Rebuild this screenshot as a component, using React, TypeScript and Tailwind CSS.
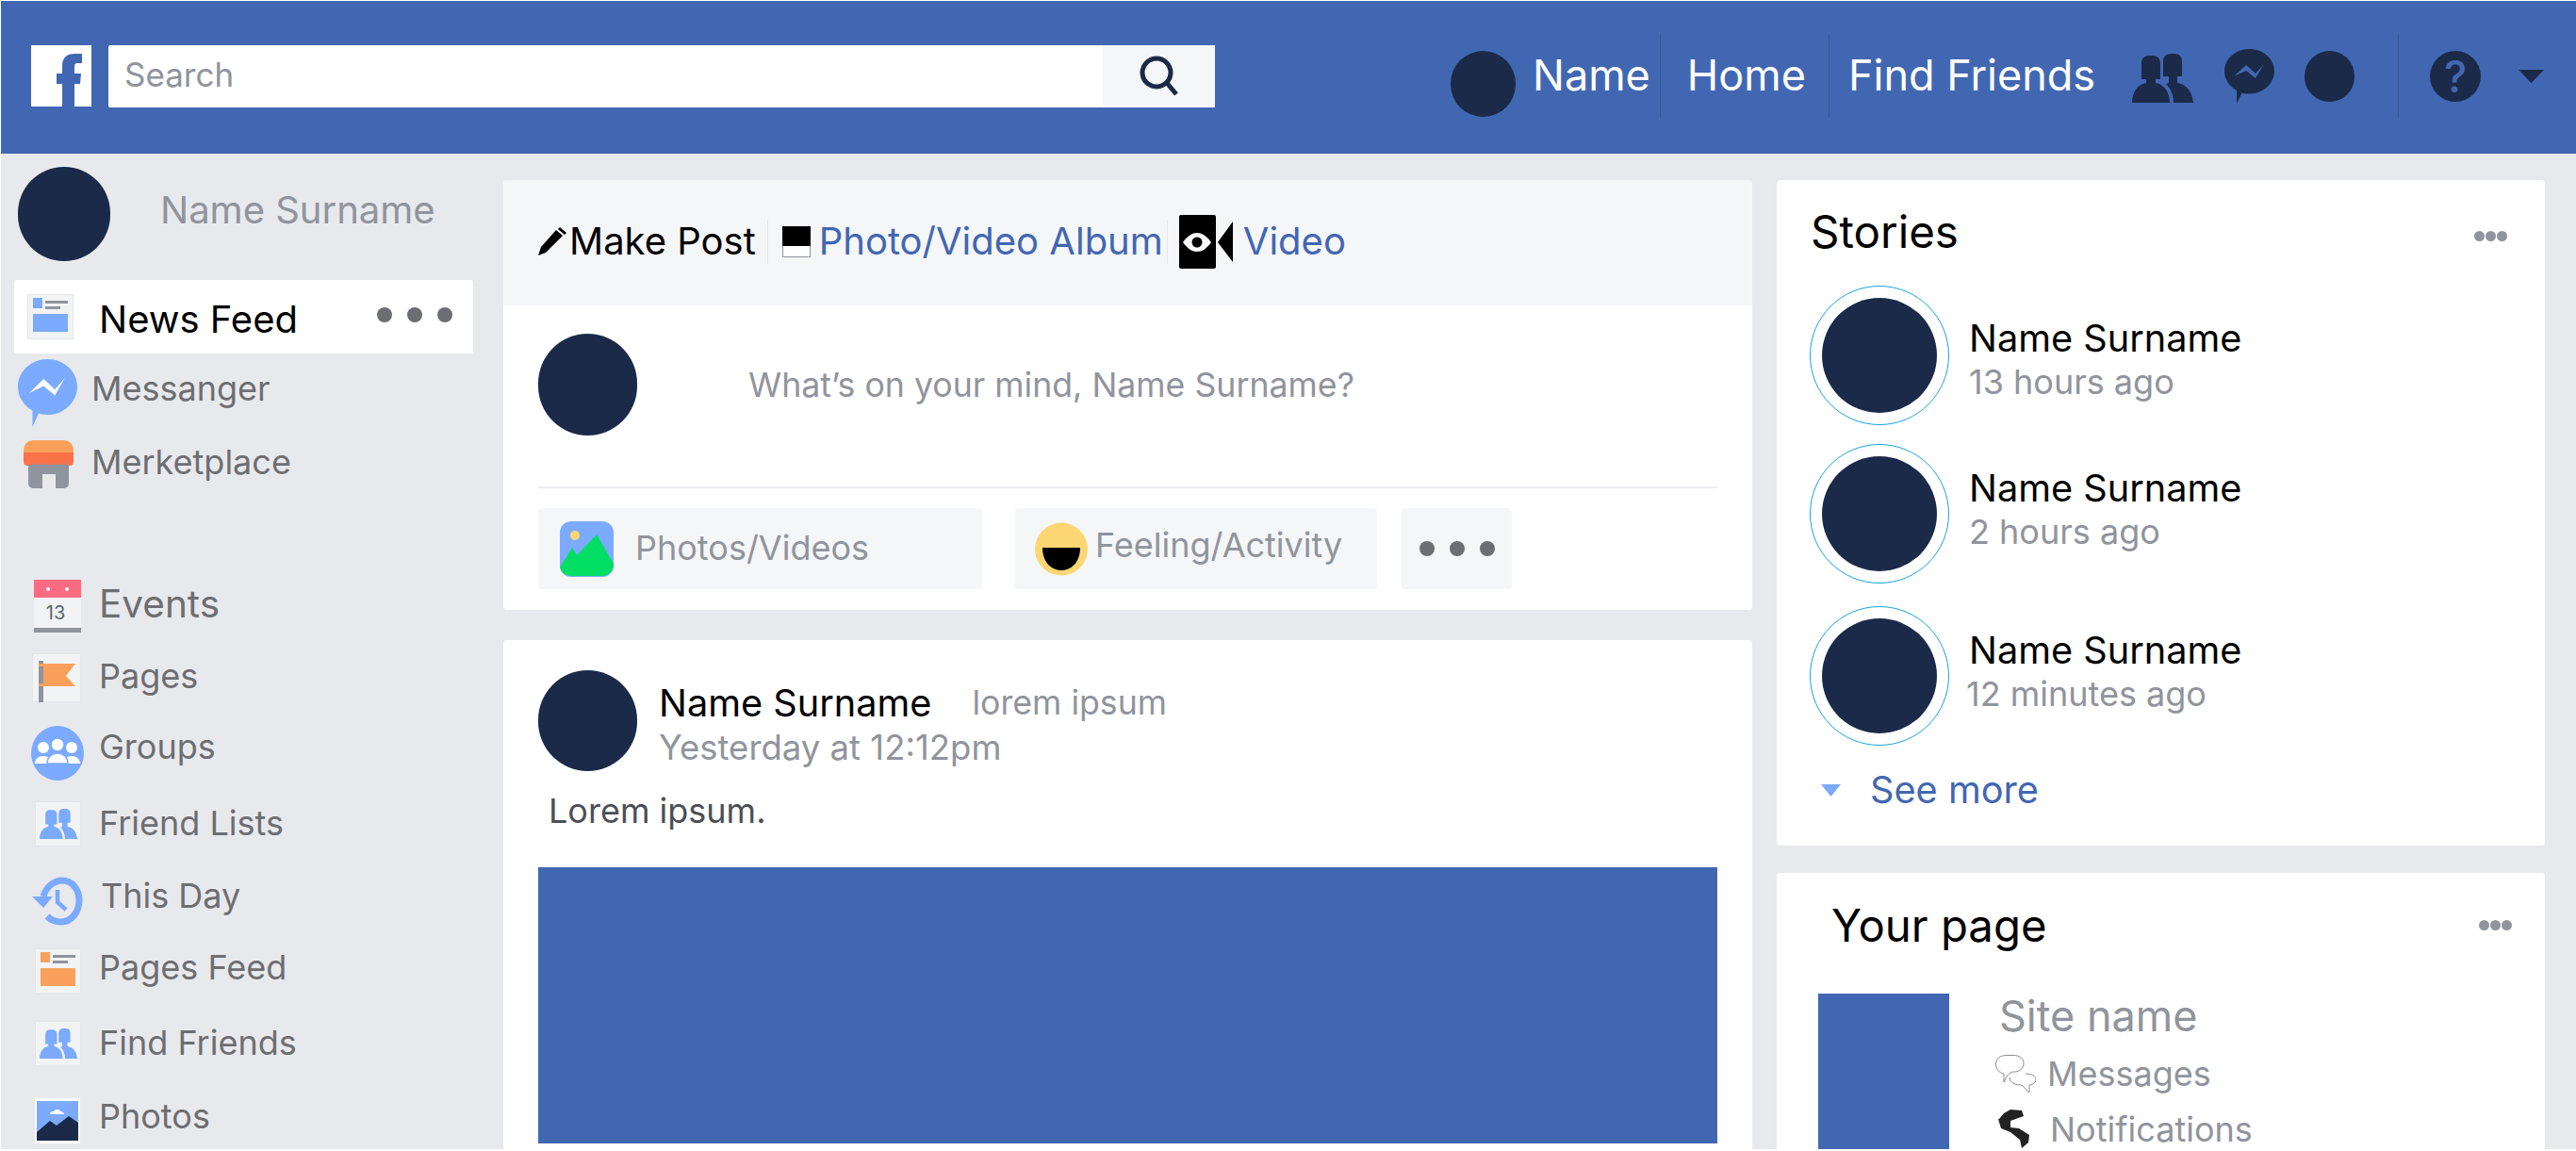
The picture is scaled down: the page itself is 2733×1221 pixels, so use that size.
import React from 'react';

const Friends = ({ className }: { className: string }) => (
  <svg viewBox="0 0 65 52" className={className} fill="currentColor">
    <path d="M18 2h4c5 0 8 3 8 8v17h-5v4c9 1 15 10 15 21H0c0-11 6-20 15-21v-4h-5V10c0-5 3-8 8-8z" />
    <path d="M41 0h4c5 0 8 3 8 8v16h-5v7c10 1 16 10 17 21H44c0-8-3-15-8-20l3-1v-7h-6V8c0-5 3-8 8-8z" />
  </svg>
);

const Messenger = ({ className, bolt }: { className: string; bolt: string }) => (
  <svg viewBox="0 0 53 58" className={className} preserveAspectRatio="none">
    <path fill="currentColor" d="M26.500 0C41 0 53 10.500 53 23.500S41 47.500 26.500 47.500c-3 0-6-.4-8-1.100L13 58V44C5 39.500 0 32 0 23.500 0 10.500 12 0 26.500 0z" />
    <path fill={bolt} d="M10 29l13-12 10 9 9-10-9 15-10-8z" />
  </svg>
);

const Dots = ({ className }: { className: string }) => (
  <div className={`flex items-center ${className}`}>
    <span className="w-4 h-4 rounded-full bg-[#6d6e71]" />
    <span className="w-4 h-4 rounded-full bg-[#6d6e71]" />
    <span className="w-4 h-4 rounded-full bg-[#6d6e71]" />
  </div>
);

const SmallDots = ({ className = '' }: { className?: string }) => (
  <div className={`flex items-center gap-px ${className}`}>
    <span className="w-[11px] h-[11px] rounded-full bg-[#90949c]" />
    <span className="w-[11px] h-[11px] rounded-full bg-[#90949c]" />
    <span className="w-[11px] h-[11px] rounded-full bg-[#90949c]" />
  </div>
);

const Avatar = ({ className }: { className: string }) => <div className={`rounded-full bg-[#1b2a49] shrink-0 ${className}`} />;

const Feed = ({ main }: { main: string }) => (
  <svg viewBox="0 0 49 48" className="w-[49px] h-[48px]">
    <rect x=".5" y=".5" width="48" height="47" fill="#f2f3f5" stroke="#e4e6ea" />
    <rect x="6" y="4" width="10" height="11" fill={main} />
    <rect x="19" y="7" width="24" height="3" fill="#90949c" />
    <rect x="19" y="13" width="16" height="3" fill="#90949c" />
    <rect x="6" y="21" width="37" height="19" fill={main} />
  </svg>
);

const FriendsTile = () => (
  <div className="w-[49px] h-[48px] bg-[#f2f3f5] border border-[#e4e6ea] flex items-center justify-center">
    <Friends className="w-[44px] h-[32px] text-[#7baaff]" />
  </div>
);

const sideIcons: Record<string, React.ReactNode> = {
  Events: (
    <svg viewBox="0 0 50 56" className="w-[50px] h-[56px]">
      <rect width="50" height="56" fill="#f2f3f5" />
      <rect width="50" height="19" fill="#ff6b81" />
      <circle cx="15" cy="10" r="2" fill="#fff" />
      <circle cx="35" cy="10" r="2" fill="#fff" />
      <rect y="51" width="50" height="5" fill="#90949c" />
      <text x="23" y="42" textAnchor="middle" fontSize="20" fill="#606770" fontFamily="Inter, sans-serif">13</text>
    </svg>
  ),
  Pages: (
    <svg viewBox="0 0 52 52" className="w-[52px] h-[52px]">
      <rect x=".5" y=".5" width="51" height="51" fill="#f2f3f5" stroke="#e4e6ea" />
      <rect x="7" y="8" width="5" height="44" fill="#90949c" />
      <path fill="#f9a15c" d="M7 11h39L36 24l10 11H7v-3h5V14H7z" />
    </svg>
  ),
  Groups: (
    <svg viewBox="0 0 56 58" className="w-[56px] h-[58px]">
      <ellipse cx="28" cy="29" rx="28" ry="29" fill="#7baaff" />
      <g fill="#fff">
        <circle cx="13" cy="23" r="6" />
        <circle cx="43" cy="23" r="6" />
        <path d="M4 40c0-5 4-8 9-8s9 3 9 8zM34 40c0-5 4-8 9-8s9 3 9 8z" />
      </g>
      <g fill="#fff" stroke="#7baaff" strokeWidth="1.500">
        <circle cx="28" cy="20" r="7" />
        <path d="M17 40c0-7 5-11 11-11s11 4 11 11z" />
      </g>
    </svg>
  ),
  'Friend Lists': <FriendsTile />,
  'This Day': (
    <svg viewBox="0 0 54 52" className="w-[54px] h-[52px]" fill="none">
      <path stroke="#7baaff" strokeWidth="7" d="M12 21C15 10 24 4 32 4c10 0 18 9 18 21 0 13-9 23-19 23-6 0-11-2-15-6" />
      <path fill="#7baaff" d="M0 21h22L12 33z" />
      <path stroke="#7baaff" strokeWidth="4.500" d="M27 14v13l9 8" />
    </svg>
  ),
  'Pages Feed': <Feed main="#f9a15c" />,
  'Find Friends': <FriendsTile />,
  Photos: (
    <svg viewBox="0 0 48 48" className="w-[48px] h-[48px]">
      <rect width="48" height="48" fill="#fff" />
      <rect x="2" y="3" width="44" height="42" fill="#7baaff" />
      <path fill="#1b2a49" d="M2 45V36l14-12 7 5 13-10 10 7v19z" />
      <path fill="#fff" d="M16 17c0-3 3-3 4-3 1-3 6-3 7 0 2 0 4 1 4 3z" />
    </svg>
  ),
};

const sideLinks = [
  { label: 'Events', box: 'h-[56px] mt-[97px] pl-[35px]', text: 'ml-[19px] pb-[4px] text-[40.500px] leading-[50px]' },
  { label: 'Pages', box: 'h-[52px] mt-[22px] pl-[33px]', text: 'ml-[19px] pb-[4px]' },
  { label: 'Groups', box: 'h-[58px] mt-[25px] pl-[32px]', text: 'ml-[16px] pb-[14px]' },
  { label: 'Friend Lists', box: 'h-[48px] mt-[22px] pl-[36px]', text: 'ml-[19px] pb-[2px]' },
  { label: 'This Day', box: 'h-[52px] mt-[32px] pl-[33px]', text: 'ml-[19px] pb-[12px]' },
  { label: 'Pages Feed', box: 'h-[48px] mt-[24px] pl-[36px]', text: 'ml-[19px] pb-[8px]' },
  { label: 'Find Friends', box: 'h-[46px] mt-[30px] pl-[36px]', text: 'ml-[19px] pb-[2px]' },
  { label: 'Photos', box: 'h-[48px] mt-[35px] pl-[36px]', text: 'ml-[20px] pb-[10px]' },
];

const stories = [
  { ago: '13 hours ago', box: 'mt-[31px]', sub: 'ml-0', text: 'pt-[8px]' },
  { ago: '2 hours ago', box: 'mt-[20px]', sub: 'ml-0', text: 'pb-[10px]' },
  { ago: '12 minutes ago', box: 'mt-[24px]', sub: '-ml-[3px]', text: 'pb-[10px]' },
];

export default function App() {
  return (
    <div className="w-[2733px] h-[1221px] overflow-hidden bg-white pt-px pl-px font-['Inter',sans-serif] text-[36px] leading-[44px] text-[#90949c]">
      <div className="h-[1218px] bg-[#e8e9ed] overflow-hidden">
        <header className="h-[162px] pb-[3px] bg-[#4267b2] flex items-center text-white text-[45px] leading-[52px]">
          <div className="ml-[32px] w-[64px] h-[65px] bg-white shrink-0">
            <svg viewBox="0 0 64 65" className="w-[64px] h-[65px]">
              <path fill="#4267b2" d="M33 65V41H27V30H33V22C33 13 38 9 46 9H54V19H49C47 19 46 20 46 23V30H53L52 41H46V65Z" />
            </svg>
          </div>
          <div className="ml-[18px] w-[1174px] h-[66px] bg-white rounded-[2px] flex items-center justify-between shrink-0">
            <span className="ml-[17px] pb-[4px] text-[35px] leading-[44px] text-[#90949c]">Search</span>
            <div className="w-[119px] h-[66px] bg-[#f5f6f8] flex items-center justify-center">
              <svg viewBox="0 0 42 43" className="w-[42px] h-[43px]" fill="none" stroke="#1b2a49" strokeWidth="5">
                <circle cx="18" cy="18" r="15" />
                <path d="M29 29l10 12" />
              </svg>
            </div>
          </div>
          <Avatar className="ml-[250px] mt-[16px] w-[69px] h-[70px]" />
          <span className="ml-[18px] pb-[2px]">Name</span>
          <div className="ml-[10px] w-px h-[89px] bg-[#385898]" />
          <span className="ml-[28px] pb-[2px]">Home</span>
          <div className="ml-[24px] w-px h-[89px] bg-[#385898]" />
          <span className="ml-[20px] pb-[2px]">Find Friends</span>
          <Friends className="ml-[39px] mt-[4px] w-[65px] h-[52px] text-[#1b2a49] shrink-0" />
          <Messenger className="ml-[33px] w-[53px] h-[58px] text-[#1b2a49] shrink-0" bolt="#4267b2" />
          <Avatar className="ml-[32px] w-[53px] h-[54px]" />
          <div className="ml-[46px] w-px h-[89px] bg-[#385898]" />
          <div className="ml-[33px] w-[54px] h-[54px] rounded-full bg-[#1b2a49] flex items-center justify-center text-[#4267b2] text-[46px] font-medium shrink-0">?</div>
          <svg viewBox="0 0 27 14" className="ml-[40px] w-[27px] h-[14px] shrink-0">
            <path fill="#1b2a49" d="M0 0h27L13.500 14z" />
          </svg>
        </header>

        <main className="flex items-start">
          <aside className="w-[533px] shrink-0">
            <div className="flex items-start pt-[14px] pl-[18px]">
              <Avatar className="w-[98px] h-[100px]" />
              <span className="ml-[53px] mt-[22px] text-[40px] leading-[48px]">Name Surname</span>
            </div>
            <div className="ml-[14px] mt-[20px] w-[487px] h-[78px] bg-white rounded-[2px] flex items-center">
              <div className="ml-[14px]"><Feed main="#7baaff" /></div>
              <span className="ml-[27px] pt-[6px] text-[40px] leading-[48px] text-black">News Feed</span>
              <Dots className="ml-[84px] gap-4 pb-[4px]" />
            </div>
            <div className="flex items-center h-[72px] mt-[6px] pl-[18px] text-[#6d6e71]">
              <Messenger className="w-[63px] h-[72px] text-[#7baaff]" bolt="#fff" />
              <span className="ml-[15px] pb-[10px]">Messanger</span>
            </div>
            <div className="flex items-center h-[51px] mt-[14px] pl-[24px] text-[#6d6e71]">
              <svg viewBox="0 0 53 51" className="w-[53px] h-[51px]">
                <path fill="#90949c" d="M5 20h43v26a5 5 0 0 1-5 5H34V36H20v15H10a5 5 0 0 1-5-5z" />
                <path fill="#f9a15c" d="M10 0h33a10 10 0 0 1 10 10v4H0v-4A10 10 0 0 1 10 0z" />
                <path fill="#fb7249" d="M0 13h53v10a4 4 0 0 1-4 4c-3 0-5-1-6-3-2 3-9 3-10 0-2 3-10 3-13 0-1 3-8 3-10 0-1 2-3 3-6 3a4 4 0 0 1-4-4z" />
              </svg>
              <span className="ml-[19px] pb-[6px]">Merketplace</span>
            </div>
            {sideLinks.map((link) => (
              <div key={link.label} className={`flex items-center text-[#6d6e71] ${link.box}`}>
                <div className="shrink-0">{sideIcons[link.label]}</div>
                <span className={link.text}>{link.label}</span>
              </div>
            ))}
          </aside>

          <section className="w-[1325px] shrink-0 pt-[28px]">
            <div className="h-[456px] bg-white rounded-[4px] overflow-hidden">
              <div className="h-[133px] pb-[3px] bg-[#f5f6f8] flex items-center text-[40px] leading-[48px] text-[#4267b2]">
                <svg viewBox="0 0 30 30" className="ml-[37px] w-[30px] h-[30px] shrink-0">
                  <path d="M0 30l3-9L19 3l7 6L8 27z" />
                  <path d="M23 0l7 6-2 2-7-6z" />
                </svg>
                <span className="ml-[3px] text-black">Make Post</span>
                <div className="ml-[12px] w-px h-[47px] bg-[#e4e6ea]" />
                <svg viewBox="0 0 30 33" className="ml-[15px] w-[30px] h-[33px] shrink-0">
                  <rect x=".5" y=".5" width="29" height="32" fill="#fff" stroke="#90949c" />
                  <rect width="30" height="21" />
                </svg>
                <span className="ml-[9px]">Photo/Video Album</span>
                <div className="ml-[4px] w-px h-[47px] bg-[#e4e6ea]" />
                <svg viewBox="0 0 57 57" className="ml-[12px] w-[57px] h-[57px] shrink-0">
                  <rect width="39" height="57" rx="2" />
                  <path d="M41 29L57 7v43z" />
                  <path fill="#fff" d="M4 29c5-7 10-10 15-10s10 3 15 10c-5 7-10 10-15 10S9 36 4 29z" />
                  <circle cx="19" cy="29" r="5.500" />
                </svg>
                <span className="ml-[11px]">Video</span>
              </div>
              <div className="h-[194px] mx-[37px] border-b-2 border-[#eceef0] flex items-start pt-[30px] relative">
                <Avatar className="w-[105px] h-[108px]" />
                <span className="ml-[118px] mt-[32px] text-[35.700px]">What’s on your mind, Name Surname?</span>
              </div>
              <div className="flex mx-[37px] mt-[21px]">
                <div className="w-[471px] h-[86px] bg-[#f5f6f8] rounded-[4px] flex items-center">
                  <svg viewBox="0 0 57 59" className="ml-[23px] w-[57px] h-[59px] shrink-0">
                    <rect width="57" height="59" rx="12" fill="#7baaff" />
                    <circle cx="16" cy="15" r="5" fill="#fcd672" />
                    <path fill="#00df64" d="M0 49l13-21 5 8L39 14l18 31v2a12 12 0 0 1-12 11H12A12 12 0 0 1 0 49z" />
                  </svg>
                  <span className="ml-[23px] pb-[2px]">Photos/Videos</span>
                </div>
                <div className="ml-[35px] w-[384px] h-[86px] bg-[#f5f6f8] rounded-[4px] flex items-center">
                  <svg viewBox="0 0 56 57" className="ml-[21px] w-[56px] h-[57px] shrink-0">
                    <circle cx="28" cy="28.500" r="28" fill="#fcd672" />
                    <path d="M8 27h40c0 15-9 24-20 24S8 42 8 27z" />
                  </svg>
                  <span className="ml-[8px] pb-[8px]">Feeling/Activity</span>
                </div>
                <div className="ml-[26px] w-[117px] h-[86px] bg-[#f5f6f8] rounded-[4px] flex items-center justify-center">
                  <Dots className="gap-4" />
                </div>
              </div>
            </div>

            <div className="mt-[32px] h-[600px] bg-white rounded-[4px] px-[37px] pt-[32px]">
              <div className="flex items-start">
                <Avatar className="w-[105px] h-[107px]" />
                <div className="ml-[23px] mt-[11px]">
                  <div className="flex items-start">
                    <span className="text-[39.700px] leading-[48px] text-black">Name Surname</span>
                    <span className="ml-[43px] mt-[1px] text-[35.700px]">lorem ipsum</span>
                  </div>
                  <div className="mt-[1px] text-[36.500px]">Yesterday at 12:12pm</div>
                </div>
              </div>
              <p className="ml-[11px] mt-[20px] text-[#4b4f56]">Lorem ipsum.</p>
              <div className="mt-[38px] w-[1251px] h-[293px] bg-[#4267b2]" />
            </div>
          </section>

          <section className="ml-[26px] w-[815px] shrink-0 pt-[28px]">
            <div className="h-[706px] bg-white rounded-[4px] pt-[28px] px-[35px]">
              <div className="flex items-center justify-between pl-[1px]">
                <span className="text-[47.500px] leading-[54px] text-black">Stories</span>
                <SmallDots className="mr-[5px] mt-[8px]" />
              </div>
              <div className="-mt-px">
                {stories.map((s) => (
                  <div key={s.ago} className={`flex items-center ${s.box}`}>
                    <div className="w-[148px] h-[148px] rounded-full border border-[#18a3e0] flex items-center justify-center shrink-0">
                      <Avatar className="w-[122px] h-[122px]" />
                    </div>
                    <div className={`ml-[21px] ${s.text}`}>
                      <div className="text-[39.700px] leading-[48px] text-black">Name Surname</div>
                      <div className={s.sub}>{s.ago}</div>
                    </div>
                  </div>
                ))}
              </div>
              <div className="flex items-center mt-[23px] pl-[12px] text-[39.700px] leading-[48px] text-[#4267b2]">
                <svg viewBox="0 0 21 13" className="w-[21px] h-[13px] shrink-0">
                  <path fill="#7baaff" d="M0 0h21L10.500 13z" />
                </svg>
                <span className="ml-[31px]">See more</span>
              </div>
            </div>

            <div className="mt-[29px] h-[400px] bg-white rounded-[4px] pt-[29px]">
              <div className="flex items-center justify-between pl-[58px] pr-[35px]">
                <span className="text-[47.300px] leading-[54px] text-black">Your page</span>
                <SmallDots className="-mt-[2px]" />
              </div>
              <div className="flex items-start mt-[45px] pl-[44px]">
                <div className="w-[139px] h-[300px] bg-[#4267b2] shrink-0" />
                <div className="ml-[49px]">
                  <div className="ml-[4px] text-[45px] leading-[48px]">Site name</div>
                  <div className="flex items-center mt-[15px]">
                    <svg viewBox="0 0 43 40" className="w-[43px] h-[40px] shrink-0" fill="#fff" stroke="#6d6e71" strokeWidth=".8">
                      <path d="M32 20c6 0 11 2 11 6 0 3-2 5-7 6v8l-8-8c-6 0-13-2-13-8" />
                      <path d="M12 .5h7C26 .5 30 4 30 9s-4 9-10 9c-4 0-7 2-11 11V20C4 19 .5 15 .5 10 .5 4 5 .5 12 .5z" />
                    </svg>
                    <span className="ml-[12px]">Messages</span>
                  </div>
                  <div className="flex items-center mt-[16px]">
                    <svg viewBox="0 0 33 42" className="ml-[3px] w-[33px] h-[42px] shrink-0">
                      <path fill="#222" d="M1 10L6 4l7-4 12 1 2 6-14 5v7l9 1 11 7-1 8-7 6-2-9-10-8-10-4-3-10z" />
                    </svg>
                    <span className="ml-[22px] leading-[36px]">Notifications</span>
                  </div>
                </div>
              </div>
            </div>
          </section>
        </main>
      </div>
    </div>
  );
}
